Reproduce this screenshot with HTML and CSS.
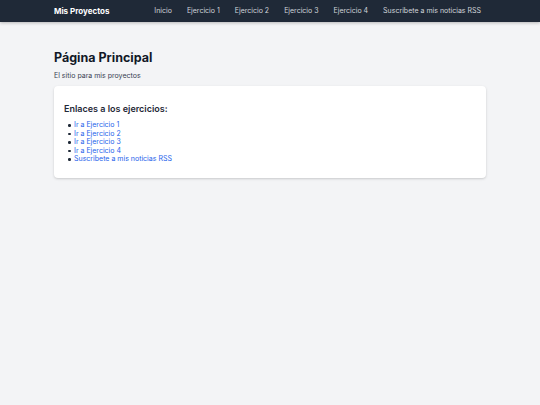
FILE: index.html
```html
<!DOCTYPE html>
<html lang="es">
<head>
<meta charset="utf-8">
<title>Mis Proyectos</title>
<link rel="stylesheet" href="styles.css">
</head>
<body>
<nav class="navbar">
  <div class="nav-inner">
    <a class="brand" href="#">Mis Proyectos</a>
    <ul class="nav-links">
      <li><a href="#">Inicio</a></li>
      <li><a href="#">Ejercicio 1</a></li>
      <li><a href="#">Ejercicio 2</a></li>
      <li><a href="#">Ejercicio 3</a></li>
      <li><a href="#">Ejercicio 4</a></li>
      <li><a href="#">Suscribete a mis noticias RSS</a></li>
    </ul>
  </div>
</nav>
<main class="container">
  <h1 class="title">Página Principal</h1>
  <p class="subtitle">El sitio para mis proyectos</p>
  <section class="card">
    <h2 class="card-title">Enlaces a los ejercicios:</h2>
    <ul class="link-list">
      <li><a href="#">Ir a Ejercicio 1</a></li>
      <li><a href="#">Ir a Ejercicio 2</a></li>
      <li><a href="#">Ir a Ejercicio 3</a></li>
      <li><a href="#">Ir a Ejercicio 4</a></li>
      <li><a href="#">Suscribete a mis noticias RSS</a></li>
    </ul>
  </section>
</main>
</body>
</html>
```
FILE: styles.css
```css
* { box-sizing: border-box; }
html, body { margin: 0; padding: 0; }
body {
  background: #f3f4f6;
  font-family: Inter, "Noto Sans", sans-serif;
  color: #1f2937;
  min-height: 405px;
}
.navbar {
  background: #1f2937;
  height: 22px;
  box-shadow: 0 1px 3px rgba(0,0,0,0.25);
}
.nav-inner {
  width: 432px;
  margin: 0 auto;
  height: 100%;
  display: flex;
  align-items: center;
  justify-content: space-between;
  padding-right: 5px;
  line-height: 10px;
}
.brand {
  color: #ffffff;
  font-weight: 700;
  font-size: 8px;
  text-decoration: none;
}
.nav-links {
  list-style: none;
  margin: 0;
  padding: 0;
  display: flex;
  align-items: center;
  gap: 15px;
  font-size: 7px;
}
.nav-links a {
  color: #d1d5db;
  text-decoration: none;
}
.container {
  width: 432px;
  margin: 0 auto;
  padding-top: 28px;
}
.title {
  font-size: 12.5px;
  font-weight: 700;
  color: #111827;
  margin: 0;
  line-height: 16px;
}
.subtitle {
  font-size: 7px;
  color: #374151;
  margin: 5px 0 0;
  line-height: 10px;
}
.card {
  margin-top: 5px;
  background: #ffffff;
  border-radius: 4px;
  box-shadow: 0 1px 3px rgba(0,0,0,0.12), 0 1px 2px rgba(0,0,0,0.06);
  padding: 17px 10px 14px;
}
.card-title {
  font-size: 9px;
  font-weight: 600;
  color: #1f2937;
  margin: 0 0 6px;
  line-height: 12px;
}
.link-list {
  list-style: none;
  margin: 0;
  padding: 0;
  font-size: 7px;
  line-height: 8.5px;
}
.link-list li {
  display: flex;
  align-items: center;
}
.link-list li::before {
  content: "";
  width: 2.5px;
  height: 2.5px;
  border-radius: 50%;
  background: #1f2937;
  margin: 0 3.5px 0 4px;
  flex: none;
}
.link-list a {
  color: #2563eb;
  text-decoration: none;
}
```
